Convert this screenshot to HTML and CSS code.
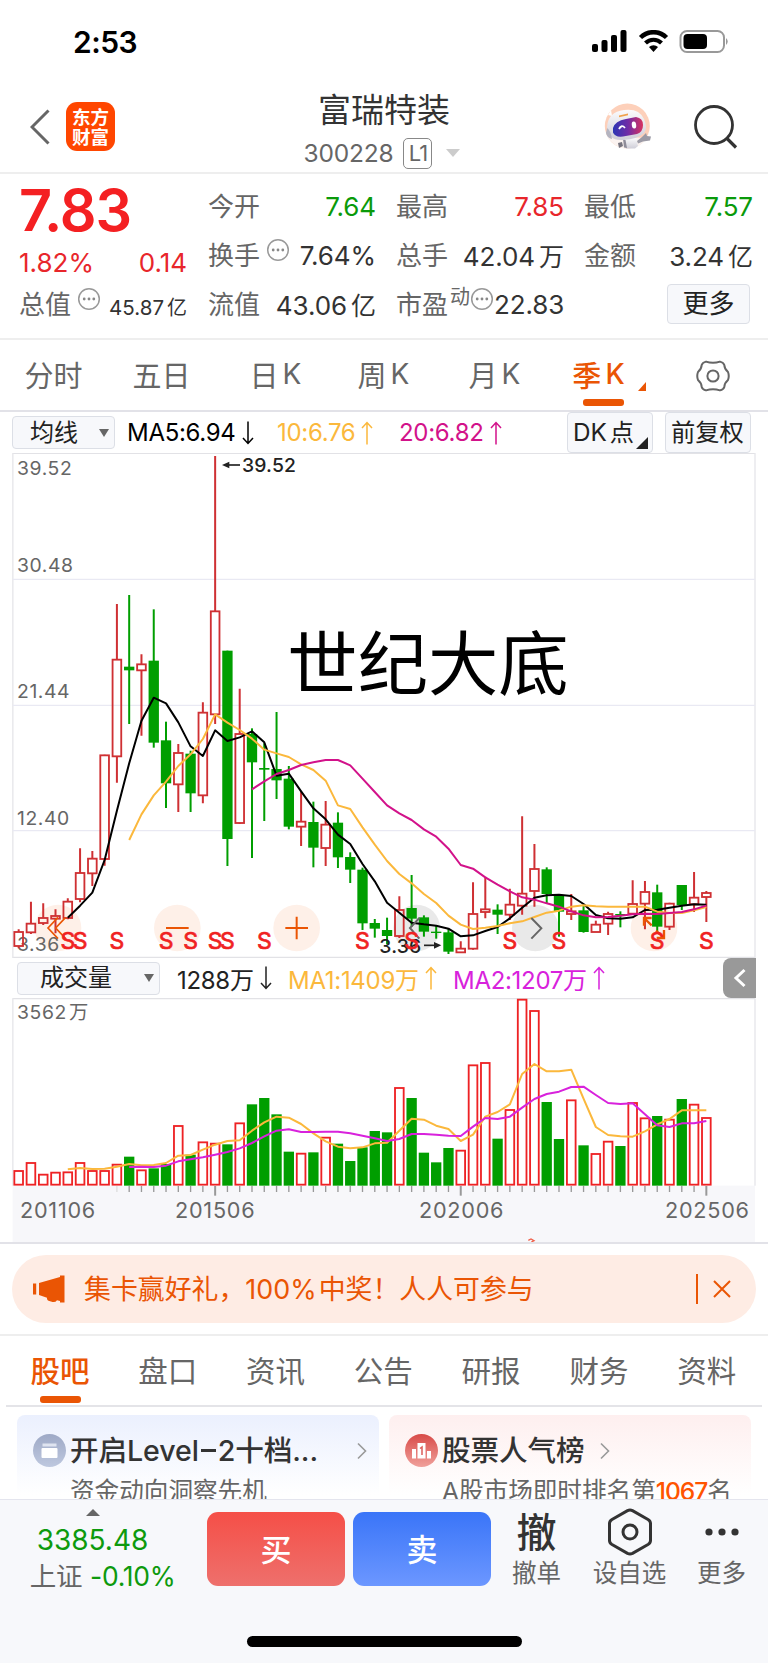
FILE: index.html
```html
<!DOCTYPE html>
<html lang="zh-CN">
<head>
    <meta charset="UTF-8">
    <meta name="viewport" content="width=device-width, initial-scale=1.0">
    <title>富瑞特装 300228</title>
    <link rel="stylesheet" href="styles.css">
</head>
<body>
    <svg class="defs" width="0" height="0">
        <symbol id="up" viewBox="0 0 12 24"><path d="M6 23.5V1.5M1 7l5-5.5L11 7" fill="none" stroke="currentColor" stroke-width="1.5"/></symbol>
        <symbol id="down" viewBox="0 0 12 24"><path d="M6 .5v22M1 17l5 5.5 5-5.5" fill="none" stroke="currentColor" stroke-width="1.5"/></symbol>
        <symbol id="tip" viewBox="0 0 24 24"><circle cx="12" cy="12" r="10.3" fill="none" stroke="#999" stroke-width="1.5"/><circle cx="7.2" cy="12" r="1.4" fill="#888"/><circle cx="12" cy="12" r="1.4" fill="#888"/><circle cx="16.8" cy="12" r="1.4" fill="#888"/></symbol>
        <symbol id="arrow" viewBox="0 0 10 18"><path d="M1 1.5L8.5 9 1 16.5" fill="none" stroke="#999" stroke-width="1.6"/></symbol>
    </svg>

    <div class="status">
        <span class="time">2:53</span>
        <svg class="status-icons" width="138" height="24" viewBox="0 0 138 24">
            <rect x="0" y="14" width="6" height="8" rx="2"/>
            <rect x="9.5" y="10" width="6" height="12" rx="2"/>
            <rect x="19" y="5" width="6" height="17" rx="2"/>
            <rect x="28.5" y="0" width="6" height="22" rx="2"/>
            <path d="M48.5 7.5a18.5 18.5 0 0 1 26 0" fill="none" stroke="#000" stroke-width="4.5"/>
            <path d="M53.5 13a11.5 11.5 0 0 1 16 0" fill="none" stroke="#000" stroke-width="4.2"/>
            <path d="M61.5 22l-4.5-5a6.5 6.5 0 0 1 9 0z"/>
            <rect x="88.5" y="1" width="43.5" height="21" rx="6.5" fill="none" stroke="#999" stroke-width="2"/>
            <rect x="91.5" y="4" width="23.5" height="15" rx="4"/>
            <path d="M134 8q3.5 3.5 0 7z" fill="#999"/>
        </svg>
    </div>

    <div class="header">
        <div class="header-left">
            <svg width="20" height="36" viewBox="0 0 20 36"><path d="M18.5 1.5L2 18l16.5 16.5" fill="none" stroke="#666" stroke-width="3"/></svg>
            <div class="logo"><span>东方</span><span>财富</span></div>
        </div>
        <div class="header-title">
            <div class="name">富瑞特装</div>
            <div class="code"><span>300228</span><span class="level">L1</span><i class="tri-down"></i></div>
        </div>
        <div class="header-right">
            <svg width="50" height="50" viewBox="0 0 50 50">
                <defs>
                    <linearGradient id="visor" x1="0" y1="0" x2="1" y2="0"><stop offset="0" stop-color="#2b36b4"/><stop offset=".5" stop-color="#6f2ba6"/><stop offset="1" stop-color="#d8335f"/></linearGradient>
                    <linearGradient id="shell" x1="0" y1="0" x2="0" y2="1"><stop offset="0" stop-color="#fbfbfc"/><stop offset="1" stop-color="#cfced8"/></linearGradient>
                </defs>
                <circle cx="24.3" cy="25" r="22.5" fill="#fdd0ba"/>
                <path d="M4 35l40 2q-6 10-19.700 10.500Q10 47 4 35z" fill="#fbf3f0"/>
                <path d="M20 37h13l2 8-3 2.500H23z" fill="url(#shell)"/>
                <path d="M20 38l2.500 1 1.500 8-3-.500z" fill="#8f8d99"/>
                <path d="M34 40l5-4 4-4 1 3 4 .500-1 4-7 1-5 2z" fill="#9c9ba6"/>
                <path d="M15 42l4-1 1 4-4 2z" fill="#77757f"/>
                <path d="M5 14l3-5 1 6z" fill="#fff"/>
                <path d="M4 26Q5 11 21 9 36 7 41 18q4 9 0 14-6 6-21 7Q5 40 4 26z" fill="url(#shell)"/>
                <path d="M4 27q4 3 5 11-5-1-6-6z" fill="#b4b4c0"/>
                <path d="M10 27q2-7 13-9l10-2q7 1 7 8t-6 9l-14 2.500q-8 1-10-4z" fill="url(#visor)"/>
                <path d="M16 28q2.500-5 6-1" fill="none" stroke="#fff" stroke-width="1.8"/>
                <ellipse cx="31" cy="24" rx="2.200" ry="3.500" fill="#fff" transform="rotate(-8 31 24)"/>
                <path d="M16 14.500l9-2v1.800l-9 2z" fill="#f0a24c"/>
            </svg>
            <svg width="46" height="46" viewBox="0 0 46 46"><circle cx="21" cy="22" r="18.5" fill="none" stroke="#333" stroke-width="2.8"/><path d="M34 35.5l9 9" stroke="#333" stroke-width="3.200"/></svg>
        </div>
    </div>

    <div class="quote">
        <div class="quote-main">
            <div class="price">7.83</div>
            <div class="change"><span>1.82%</span><span>0.14</span></div>
            <div class="cell"><label>总值</label><svg class="tip" width="24" height="24"><use href="#tip"/></svg><b class="small">45.87<i>亿</i></b></div>
        </div>
        <div class="quote-grid">
            <div class="cell"><label>今开</label><b class="green">7.64</b></div>
            <div class="cell"><label>最高</label><b class="red">7.85</b></div>
            <div class="cell"><label>最低</label><b class="green">7.57</b></div>
            <div class="cell"><label>换手</label><svg class="tip" width="24" height="24"><use href="#tip"/></svg><b>7.64%</b></div>
            <div class="cell"><label>总手</label><b>42.04<i>万</i></b></div>
            <div class="cell"><label>金额</label><b>3.24<i>亿</i></b></div>
            <div class="cell"><label>流值</label><b>43.06<i>亿</i></b></div>
            <div class="cell"><label>市盈</label><sup>动</sup><svg class="tip tight" width="24" height="24"><use href="#tip"/></svg><b>22.83</b></div>
            <div class="cell"><button class="more">更多</button></div>
        </div>
    </div>

    <div class="periods">
        <span>分时</span>
        <span>五日</span>
        <span>日<em>K</em></span>
        <span>周<em>K</em></span>
        <span>月<em>K</em></span>
        <span class="active">季<em>K</em><i class="corner"></i></span>
        <span class="gear"><svg width="34" height="32" viewBox="0 0 34 32" fill="none" stroke="#666" stroke-width="2"><path d="M10 1.600Q17 4 24 1.600 27.500 2.500 28.300 5 28.500 9 32 12 33.500 16 32 20 28.500 23 28.300 27 27.500 29.500 24 30.400 17 28 10 30.400 6.500 29.500 5.700 27 5.500 23 2 20 .500 16 2 12 5.500 9 5.700 5 6.500 2.500 10 1.600z"/><circle cx="17" cy="16" r="5.600"/></svg></span>
    </div>

    <div class="ma-bar">
        <div class="select">均线<i class="caret"></i></div>
        <span class="black">MA5:6.94<svg width="12" height="24"><use href="#down"/></svg></span>
        <span class="yellow">10:6.76<svg width="12" height="24"><use href="#up"/></svg></span>
        <span class="pink">20:6.82<svg width="12" height="24"><use href="#up"/></svg></span>
        <div class="tag">DK<em>点</em><i class="corner dark"></i></div>
        <div class="tag">前复权</div>
    </div>

    <!-- chart units are a third of a pixel -->
    <svg id="kline" class="kline" width="768" height="505" viewBox="0 9 2304 1515"></svg>

    <div class="vol-bar">
        <div class="select">成交量<i class="caret"></i></div>
        <span class="dark-text">1288万<svg width="12" height="24"><use href="#down"/></svg></span>
        <span class="yellow">MA1:1409万<svg width="12" height="24"><use href="#up"/></svg></span>
        <span class="violet">MA2:1207万<svg width="12" height="24"><use href="#up"/></svg></span>
        <div class="fold"><svg width="14" height="20" viewBox="0 0 14 20"><path d="M11.5 2L3 10l8.5 8" fill="none" stroke="#fff" stroke-width="3"/></svg></div>
    </div>

    <svg id="volume" class="volume" width="768" height="244" viewBox="0 24 2304 732"></svg>

    <div class="notice-wrap">
        <div class="notice">
            <svg width="32" height="28" viewBox="0 0 32 28" fill="#ea5504"><rect x="0" y="8.5" width="3.200" height="11"/><path d="M6 8L27 2V0.500h4.500v27H27V26l-3-.800q-2 3-6 1.300-4.500-.500-4-3.800L6 20z"/></svg>
            <span class="notice-text">集卡赢好礼，100%<em>中奖！人人可参与</em></span>
            <i class="bar"></i>
            <svg width="18" height="18" viewBox="0 0 18 18"><path d="M1 1l16 16M17 1L1 17" stroke="#ea5504" stroke-width="2"/></svg>
        </div>
    </div>

    <div class="tabs">
        <span class="active">股吧</span>
        <span>盘口</span>
        <span>资讯</span>
        <span>公告</span>
        <span>研报</span>
        <span>财务</span>
        <span>资料</span>
    </div>

    <div class="cards">
        <div class="card blue">
            <div class="card-head">
                <svg width="33" height="33" viewBox="0 0 33 33"><defs><linearGradient id="g1" x1="0" y1="0" x2="0" y2="1"><stop offset="0" stop-color="#9ea9c6"/><stop offset="1" stop-color="#bec8df"/></linearGradient></defs><circle cx="16.5" cy="16.5" r="16.5" fill="url(#g1)"/><rect x="9.5" y="9.5" width="14" height="3" fill="#dfe4f0"/><rect x="8.5" y="14" width="16" height="10" rx="1" fill="#fff"/></svg>
                <h3>开启Level<u></u>2十档...</h3>
                <svg class="go" width="10" height="18"><use href="#arrow"/></svg>
            </div>
            <p>资金动向洞察先机</p>
        </div>
        <div class="card rose">
            <div class="card-head">
                <svg width="33" height="33" viewBox="0 0 33 33"><defs><linearGradient id="g2" x1="0" y1="0" x2="0" y2="1"><stop offset="0" stop-color="#d84b48"/><stop offset="1" stop-color="#f0a09b"/></linearGradient></defs><circle cx="16.5" cy="16.5" r="16.5" fill="url(#g2)"/><rect x="7" y="15" width="4" height="9.5" fill="#fff"/><rect x="12.5" y="9" width="8" height="15.5" fill="#fff"/><rect x="22" y="17" width="4" height="7.5" fill="#fff"/><path d="M15 14.5l2-1.5v8" fill="none" stroke="#dc5e5a" stroke-width="1.5"/></svg>
                <h3>股票人气榜</h3>
                <svg class="go near" width="10" height="18"><use href="#arrow"/></svg>
            </div>
            <p>A股市场即时排名第<strong>1067</strong>名</p>
        </div>
    </div>

    <div class="footer">
        <div class="index">
            <i class="tri-up"></i>
            <div class="index-value">3385.48</div>
            <div class="index-name">上证 <span>-0.10%</span></div>
        </div>
        <button class="trade buy">买</button>
        <button class="trade sell">卖</button>
        <div class="action"><div class="icon cancel">撤</div>撤单</div>
        <div class="action wide"><div class="icon"><svg width="46" height="48" viewBox="0 0 46 48" fill="none" stroke="#333" stroke-width="3"><path d="M20.500 2.700q2.500-1.200 5 0l15.500 8.800q2.500 1.500 2.500 4v17q0 2.500-2.500 4l-15.500 8.800q-2.500 1.200-5 0L5 36.500q-2.500-1.500-2.500-4v-17q0-2.500 2.500-4z"/><circle cx="23" cy="24" r="7"/></svg></div>设自选</div>
        <div class="action"><div class="icon"><svg width="36" height="48" viewBox="0 0 36 48" fill="#333"><circle cx="5" cy="24" r="3.600"/><circle cx="18" cy="24" r="3.600"/><circle cx="31" cy="24" r="3.600"/></svg></div>更多</div>
    </div>
    <div class="home"><i></i></div>

    <script src="script.js"></script>
</body>
</html>
```
FILE: styles.css
```css
* {
    box-sizing: border-box;
}
body {
    margin: 0;
    width: 768px;
    height: 1663px;
    overflow: hidden;
    background: #fff;
    color: #333;
    font-family: "Inter", "Noto Sans CJK SC", sans-serif;
}
i, em {
    font-style: normal;
}
svg {
    display: block;
    flex: none;
}
.defs {
    position: absolute;
}
button {
    font-family: inherit;
    padding: 0;
}
.green { color: #0a9a0a; }
.red { color: #e8262b; }
.black { color: #000; }
.dark-text { color: #222; }
.yellow { color: #fbb83c; }
.pink { color: #d2128a; }
.violet { color: #d822dc; }

/* status bar */
.status {
    height: 80px;
    padding: 4px 38px 0 73px;
    display: flex;
    justify-content: space-between;
    align-items: center;
}
.time {
    font-size: 30px;
    font-weight: 600;
    color: #000;
    letter-spacing: -0.5px;
}

/* header */
.header {
    height: 94px;
    border-bottom: 2px solid #eee;
    display: grid;
    grid-template-columns: 230px 1fr 230px;
}
.header-left {
    display: flex;
    align-items: center;
    padding: 1px 0 0 30px;
    gap: 16px;
}
.logo {
    width: 49px;
    height: 49px;
    border-radius: 11px;
    background: #ff4600;
    color: #fff;
    font-size: 18.5px;
    font-weight: 700;
    line-height: 20px;
    display: flex;
    flex-direction: column;
    align-items: center;
    justify-content: center;
}
.header-title {
    text-align: center;
    padding-top: 8px;
}
.name {
    font-size: 33px;
    line-height: 44px;
}
.code {
    height: 34px;
    margin-top: 4px;
    padding-right: 4px;
    display: flex;
    align-items: center;
    justify-content: center;
    color: #666;
    font-size: 24.5px;
    letter-spacing: -0.2px;
}
.level {
    width: 29px;
    height: 31px;
    margin-left: 10px;
    border: 1.5px solid #888;
    border-radius: 5px;
    font-size: 22px;
    line-height: 29px;
    letter-spacing: -1px;
}
.tri-down {
    margin-left: 14px;
    border: 7px solid transparent;
    border-top: 8px solid #ccc;
    border-bottom: 0;
}
.header-right {
    display: flex;
    align-items: center;
    justify-content: flex-end;
    gap: 40px;
    padding-right: 29px;
}

/* quote */
.quote {
    height: 166px;
    border-bottom: 2px solid #eee;
    padding: 8px 15px 0 19px;
    display: grid;
    grid-template-columns: 168px 1fr;
    column-gap: 21px;
}
.price {
    height: 56px;
    line-height: 56px;
    font-size: 57.5px;
    font-weight: 600;
    color: #f42022;
    letter-spacing: -1px;
}
.change {
    height: 42px;
    padding-top: 7px;
    display: flex;
    justify-content: space-between;
    align-items: center;
    font-size: 26px;
    color: #e8262b;
    letter-spacing: 0;
}
.quote-grid {
    display: grid;
    grid-template-columns: 168px 168px 169px;
    grid-auto-rows: 49px;
    column-gap: 20px;
}
.cell {
    height: 49px;
    display: flex;
    align-items: center;
    white-space: nowrap;
}
.cell label {
    margin-top: -5px;
    font-size: 26px;
    color: #666;
}
.cell b {
    margin: -1px 0 0 auto;
    font-size: 26px;
    font-weight: 400;
    letter-spacing: -0.1px;
}
.cell b i {
    margin-left: 4px;
    letter-spacing: 0;
    font-size: 25px;
}
.cell b.small {
    font-size: 20.5px;
    padding-top: 5px;
    letter-spacing: 0;
}
.cell b.small i {
    font-size: 20px;
    margin-left: 3px;
}
.cell .tip {
    margin: -11px 0 0 6px;
}
.cell .tip.tight {
    margin-left: 0;
}
.cell sup {
    font-size: 20px;
    line-height: 24px;
    color: #666;
    margin: -16px 0 0 2px;
    vertical-align: baseline;
}
.more {
    margin: -2px 3px 0 auto;
    width: 83px;
    height: 40px;
    border: 1.5px solid #dcdfe6;
    border-radius: 4px;
    background: #f7f8fb;
    color: #222;
    font-size: 26px;
    line-height: 35px;
}

/* period tabs */
.periods {
    height: 72px;
    border-bottom: 2px solid #e2e2e8;
    padding-left: 16px;
    display: grid;
    grid-template-columns: 76px 140px 88px 128px 94px 114px 112px;
    font-size: 29px;
    color: #666;
}
.periods span {
    display: flex;
    align-items: center;
    justify-content: center;
    position: relative;
    padding: 0 1px 3px 0;
}
.periods span.gear {
    padding: 1px 0 0 1px;
}
.periods em {
    margin-left: 4px;
    font-size: 28px;
}
.active {
    color: #ea5504;
    font-weight: 500;
    position: relative;
}
.active::after {
    content: "";
    position: absolute;
    left: 50%;
    bottom: 4px;
    width: 41px;
    height: 7px;
    margin-left: -16px;
    border-radius: 3px;
    background: #ea5504;
}
.corner {
    position: absolute;
    right: 10px;
    bottom: 19px;
    border-left: 8px solid transparent;
    border-bottom: 9px solid #ea5504;
}
.corner.dark {
    right: 4px;
    bottom: 3px;
    border-left: 12px solid transparent;
    border-bottom: 12px solid #222;
}

/* indicator rows */
.ma-bar, .vol-bar {
    display: grid;
    align-items: center;
    font-size: 24px;
}
.ma-bar {
    height: 41px;
    padding-left: 12px;
    grid-template-columns: 115px 150px 122px 168px 98px 86px;
}
.vol-bar {
    height: 40px;
    padding-left: 17px;
    grid-template-columns: 160px 111px 165px 270px 33px;
}
.ma-bar span, .vol-bar span {
    display: flex;
    align-items: center;
    letter-spacing: -0.3px;
    white-space: nowrap;
}
.ma-bar span svg, .vol-bar span svg {
    margin-left: 6px;
}
.select {
    width: 103px;
    height: 33px;
    border: 1.5px solid #dcdfe6;
    border-radius: 4px;
    background: #f7f8fb;
    padding: 0 5px 0 17px;
    display: flex;
    align-items: center;
    justify-content: space-between;
    line-height: 28px;
    color: #222;
}
.vol-bar .select {
    width: 143px;
    padding-left: 22px;
}
.caret {
    border: 5px solid transparent;
    border-top: 8px solid #666;
    border-bottom: 0;
}
.tag {
    width: 86px;
    height: 41px;
    border: 1.5px solid #dcdfe6;
    border-radius: 4px;
    background: #f7f8fb;
    padding-left: 5px;
    line-height: 38px;
    font-size: 24.3px;
    color: #222;
    position: relative;
    white-space: nowrap;
}
.tag em {
    margin-left: 3px;
}
.fold {
    height: 40px;
    border-radius: 8px 0 0 8px;
    background: #999;
    display: flex;
    align-items: center;
    justify-content: center;
}

/* charts */
.kline, .volume {
    font-family: "Inter", "Noto Sans CJK SC", sans-serif;
}
.kline .axis, .volume .axis {
    font-size: 58px;
    fill: #666;
    letter-spacing: 1.8px;
}
.kline .note {
    font-size: 58px;
    font-weight: 500;
    fill: #222;
    letter-spacing: 0.5px;
}
.kline .mark {
    font-size: 69px;
    fill: #f02222;
    stroke: #f02222;
    stroke-width: 2;
    text-anchor: middle;
}
.kline .title {
    font-size: 211px;
    fill: #000;
}
.volume .date {
    font-size: 65px;
    fill: #666;
    letter-spacing: 2.2px;
}

/* notice */
.notice-wrap {
    height: 94px;
    border-top: 2px solid #e2e2e8;
    border-bottom: 2px solid #eee;
    padding: 11px 12px 0;
}
.notice {
    height: 68px;
    border-radius: 34px;
    background: #feece4;
    padding: 0 25px 0 21px;
    display: flex;
    align-items: center;
    color: #ea5504;
}
.notice-text {
    margin: -3px 0 0 19px;
    flex: 1;
    font-size: 26.9px;
}
.notice-text em {
    margin-left: 2px;
}
.notice .bar {
    width: 2px;
    height: 30px;
    background: #ea5504;
    margin-right: 15px;
}

/* content tabs */
.tabs {
    height: 71px;
    margin: 0 6px;
    border-bottom: 2px solid #e4e4e8;
    display: grid;
    grid-template-columns: repeat(7, 107.8px);
    font-size: 29.5px;
    color: #666;
}
.tabs span {
    text-align: center;
    line-height: 70px;
}
.tabs .active::after {
    bottom: 3px;
    margin-left: -20px;
}

/* cards */
.cards {
    height: 92px;
    overflow: hidden;
    padding: 8px 17px 0;
    display: grid;
    grid-template-columns: 362px 362px;
    column-gap: 10px;
}
.card {
    height: 120px;
    border-radius: 8px;
    padding: 18px 12px 0 16px;
}
.card.blue { background: linear-gradient(#ebf0fe, #fff 80px); }
.card.rose { background: linear-gradient(#feefef, #fff 80px); }
.card-head {
    height: 35px;
    display: flex;
    align-items: center;
}
.card h3 {
    margin: -1px 0 0 4px;
    font-size: 28.6px;
    font-weight: 500;
    line-height: 35px;
    white-space: nowrap;
    letter-spacing: -0.1px;
}
.card h3 u {
    display: inline-block;
    width: 15px;
    height: 2.5px;
    margin: 0 2px 9px;
    background: #333;
}
.card .go {
    margin-left: auto;
}
.card .go.near {
    margin-left: 16px;
}
.card p {
    margin: 6px 0 0 37px;
    font-size: 24.6px;
    line-height: 34px;
    color: #666;
    white-space: nowrap;
}
.card strong {
    color: #ff5400;
    font-weight: 500;
    letter-spacing: -1px;
}

/* bottom bar */
.footer {
    height: 120px;
    border-top: 1.5px solid #e4e5ee;
    background: #f7f8fb;
    padding-top: 12px;
    display: flex;
}
.index {
    width: 207px;
    margin-top: -3px;
    text-align: center;
    padding-right: 22px;
}
.tri-up {
    display: block;
    width: 0;
    margin: 0 auto;
    border: 7px solid transparent;
    border-bottom: 7px solid #666;
    border-top: 0;
}
.index-value {
    margin-top: 7px;
    font-size: 28px;
    line-height: 34px;
    color: #0d9a0d;
}
.index-name {
    margin-left: 20px;
    font-size: 26.5px;
    line-height: 38px;
    color: #666;
    white-space: nowrap;
}
.index-name span {
    color: #0d9a0d;
    font-size: 26.5px;
    letter-spacing: -0.3px;
}
.trade {
    width: 138px;
    height: 74px;
    border: 0;
    border-radius: 11px;
    margin-right: 8px;
    padding-bottom: 4px;
    color: #fff;
    font-size: 31px;
    font-weight: 500;
}
.buy { background: linear-gradient(#f54f47, #ee706c); }
.sell { background: linear-gradient(#3a75f8, #6c97ff); }
.action {
    width: 75px;
    margin-top: -4px;
    text-align: center;
    font-size: 24.5px;
    line-height: 35px;
    color: #666;
}
.action.wide {
    width: 111px;
}
.action:last-child {
    width: 73px;
}
.icon {
    height: 48px;
    display: flex;
    align-items: center;
    justify-content: center;
}
.cancel {
    font-size: 40px;
    font-weight: 500;
    color: #333;
}
.home {
    height: 44px;
    background: #f7f8fb;
    display: flex;
    justify-content: center;
    padding-top: 17px;
}
.home i {
    width: 275px;
    height: 11px;
    border-radius: 5.5px;
    background: #000;
}
```
FILE: script.js
```js
const RED = '#cf3033';
const GREEN = '#009e00';
const FIRST = 56;
const STEP = 36.84;

// high, body top, body bottom, low, up/down
const candles = [
    [1438, 1446, 1488, 1495, 1], [1355, 1421, 1447, 1452, 1], [1360, 1404, 1419, 1425, 1], [1378, 1398, 1406, 1450, 1],
    [1345, 1355, 1404, 1408, 1], [1195, 1269, 1347, 1357, 1], [1203, 1226, 1270, 1308, 1], [914, 916, 1227, 1247, 1],
    [462, 629, 919, 998, 1], [435, 650, 661, 822, 0], [613, 643, 661, 857, 1], [478, 632, 878, 893, 0],
    [815, 871, 1000, 1074, 0], [882, 909, 1003, 1086, 1], [902, 911, 1030, 1086, 0], [757, 788, 1036, 1060, 1],
    [18, 484, 793, 822, 1], [602, 602, 1167, 1248, 0], [716, 852, 1119, 1121, 1], [835, 852, 937, 1224, 0],
    [880, 954, 959, 1113, 0], [786, 957, 991, 1047, 0], [948, 986, 1130, 1138, 0], [1025, 1115, 1130, 1188, 1],
    [1055, 1116, 1193, 1252, 0], [1053, 1124, 1194, 1248, 1], [1087, 1118, 1222, 1254, 0], [1207, 1221, 1259, 1299, 0],
    [1253, 1259, 1420, 1440, 0], [1407, 1419, 1436, 1463, 0], [1403, 1440, 1458, 1483, 0], [1339, 1380, 1458, 1464, 1],
    [1275, 1374, 1406, 1430, 0], [1396, 1402, 1445, 1460, 0], [1425, 1445, 1449, 1466, 0], [1437, 1447, 1505, 1512, 0],
    [1474, 1496, 1507, 1508, 1], [1297, 1392, 1496, 1499, 1], [1280, 1378, 1386, 1405, 1], [1363, 1379, 1394, 1452, 0],
    [1316, 1364, 1394, 1410, 1], [1099, 1331, 1367, 1394, 1], [1182, 1257, 1323, 1370, 1], [1252, 1258, 1332, 1362, 0],
    [1334, 1337, 1385, 1460, 0], [1332, 1384, 1392, 1410, 1], [1368, 1381, 1446, 1448, 0], [1412, 1424, 1446, 1446, 1],
    [1385, 1392, 1421, 1455, 1], [1384, 1392, 1396, 1432, 0], [1291, 1362, 1391, 1395, 1], [1293, 1326, 1361, 1438, 1],
    [1304, 1327, 1430, 1445, 0], [1358, 1361, 1430, 1440, 1], [1305, 1305, 1365, 1380, 0], [1266, 1343, 1363, 1386, 1],
    [1323, 1329, 1341, 1416, 1]
];

const ma5 = [1403, 1367, 1328, 1230, 1082, 940, 812, 743, 760, 817, 889, 918, 841, 873, 862, 844, 877, 977, 971, 1024, 1075, 1108, 1154, 1182, 1242, 1294, 1358, 1388, 1418, 1423, 1427, 1436, 1459, 1456, 1443, 1431, 1405, 1373, 1343, 1336, 1334, 1338, 1362, 1395, 1405, 1406, 1402, 1380, 1379, 1373, 1367, 1363, 1364];
const ma10 = [1170, 1093, 1036, 995, 948, 913, 867, 793, 818, 840, 866, 899, 910, 921, 943, 960, 992, 1066, 1077, 1132, 1184, 1233, 1272, 1300, 1332, 1359, 1397, 1424, 1437, 1433, 1428, 1420, 1414, 1401, 1388, 1382, 1370, 1366, 1369, 1370, 1370, 1370, 1370, 1385, 1389, 1389, 1381, 1371];
const ma20 = [1018, 994, 972, 960, 945, 937, 930, 930, 946, 986, 1026, 1066, 1090, 1110, 1138, 1160, 1196, 1245, 1256, 1282, 1304, 1324, 1342, 1349, 1360, 1370, 1384, 1396, 1402, 1401, 1397, 1393, 1391, 1392, 1389, 1386, 1378, 1367];
const sells = [4, 5, 8, 12, 14, 16, 17, 20, 28, 32, 40, 44, 52, 56];

const volumes = [543, 519, 554, 548, 547, 519, 543, 543, 524, 500, 541, 535, 522, 408, 494, 457, 461, 463, 400, 343, 324, 373, 485, 491, 487, 443, 461, 513, 472, 423, 427, 294, 324, 488, 517, 474, 482, 226, 219, 446, 360, 29, 63, 336, 447, 331, 466, 492, 455, 468, 339, 385, 378, 389, 327, 344, 384];
const vma1 = [538, 534, 537, 536, 530, 522, 526, 525, 519, 497, 495, 479, 464, 453, 451, 422, 397, 380, 383, 402, 430, 454, 470, 475, 472, 460, 458, 422, 386, 389, 407, 417, 453, 434, 380, 366, 343, 252, 222, 244, 244, 239, 326, 411, 435, 439, 440, 424, 403, 387, 361, 361, 361];
const vma2 = [531, 530, 531, 527, 514, 508, 502, 494, 486, 475, 459, 439, 422, 418, 426, 426, 425, 425, 430, 437, 445, 453, 447, 432, 432, 434, 437, 438, 410, 384, 387, 380, 353, 327, 312, 305, 291, 290, 315, 339, 342, 340, 373, 406, 411, 400, 400, 393];

const x = i => FIRST + i * STEP;

function line(values, start, color) {
    const pts = values.map((v, i) => x(i + start).toFixed(1) + ',' + v).join(' ');
    return `<polyline points="${pts}" fill="none" stroke="${color}" stroke-width="6" stroke-linejoin="round"/>`;
}

function path(d, color, width) {
    return `<path d="${d}" fill="none" stroke="${color}" stroke-width="${width}"/>`;
}

function drawKline() {
    let s = path('M38 10.5H2265M38 1522H2265', '#e2e2e6', 3.5);
    s += path('M38.5 9V1524M2265 9V1524', '#e6e6ea', 4);
    s += path('M38 388H2265M38 766H2265M38 1142H2265', '#e9e9f3', 4);

    [[174, '#fef0e8'], [532, '#fef0e8'], [890, '#fef0e8'], [1250, '#e9e9e9'], [1606, '#e9e9e9'], [1962, '#fef0e8']].forEach(c => {
        s += `<circle cx="${c[0]}" cy="1434" r="70" fill="${c[1]}"/>`;
    });

    [['39.52', 74], ['30.48', 366], ['21.44', 745], ['12.40', 1126], ['3.36', 1503]].forEach(t => {
        s += `<text class="axis" x="51" y="${t[1]}">${t[0]}</text>`;
    });

    candles.forEach((c, i) => {
        const cx = x(i);
        if (c[4]) {
            s += path(`M${cx} ${c[0]}V${c[1]}M${cx} ${c[2]}V${c[3]}`, RED, 6);
            s += `<rect x="${cx - 13}" y="${c[1]}" width="26" height="${c[2] - c[1]}" fill="none" stroke="${RED}" stroke-width="5.5"/>`;
        } else {
            s += path(`M${cx} ${c[0]}V${c[3]}`, GREEN, 6);
            s += `<rect x="${cx - 15.5}" y="${c[1]}" width="31" height="${c[2] - c[1]}" fill="${GREEN}"/>`;
        }
    });

    s += line(ma5, 4, '#000') + line(ma10, 9, '#fbb83c') + line(ma20, 19, '#d2128a');

    // highest and lowest price
    s += path('M680 45H720', '#222', 5) + '<path d="M666 45l22-10v20z" fill="#222"/>';
    s += '<text class="note" x="726" y="66">39.52</text>';
    s += '<text class="note" x="1138" y="1509">3.36</text>';
    s += path('M1272 1486H1312', '#222', 5) + '<path d="M1324 1486l-22-10v20z" fill="#222"/>';

    // chart controls
    s += path('M174 1402L144 1434L174 1466M197 1402L167 1434L197 1466', '#ea5504', 5);
    s += path('M498 1434H566M856 1434H924M890 1400V1468', '#ea5504', 6);
    s += path('M1258 1404L1230 1434L1258 1466M1594 1404L1624 1435L1594 1466', '#666', 6);
    s += path('M1932 1427V1404H1955M1932 1404L1955 1426M1992 1440V1464H1970M1992 1464L1968 1442', '#ea5504', 7);

    sells.forEach(i => {
        s += `<text class="mark" x="${x(i)}" y="1497">S</text>`;
    });

    s += '<text class="title" x="862" y="719">世纪大底</text>';
    document.getElementById('kline').innerHTML = s;
}

function drawVolume() {
    let s = '<rect x="38" y="587" width="2227" height="170" fill="#f7f7fa"/>';
    s += path('M38 25.5H2265', '#e2e2e6', 4) + path('M38.5 25V587M2265 25V587', '#e6e6ea', 4);
    s += '<text class="axis" x="51" y="87">3562<tspan dx="6">万</tspan></text>';

    volumes.forEach((v, i) => {
        const cx = x(i);
        if (candles[i][4]) {
            s += `<rect x="${cx - 13}" y="${v}" width="26" height="${584 - v}" fill="#fff" stroke="#ee2224" stroke-width="5.5"/>`;
        } else {
            s += `<rect x="${cx - 15.5}" y="${v}" width="31" height="${587 - v}" fill="${GREEN}"/>`;
        }
        if (i >= 8) {
            const major = (i - 16) % 20 === 0;
            s += path(`M${cx} 588V${major ? 617 : 606}`, i === 8 ? '#ddd' : '#999', major ? 6 : 4);
        }
    });
    s += line(vma1, 4, '#fbb83c') + line(vma2, 9, '#d822dc');

    [['201106', 60], ['201506', 525], ['202006', 1257], ['202506', 1995]].forEach(t => {
        s += `<text class="date" x="${t[1]}" y="683">${t[0]}</text>`;
    });
    s += path('M1585 751l8-4 9 5-8 4', '#f0604a', 4);
    document.getElementById('volume').innerHTML = s;
}

drawKline();
drawVolume();
```
